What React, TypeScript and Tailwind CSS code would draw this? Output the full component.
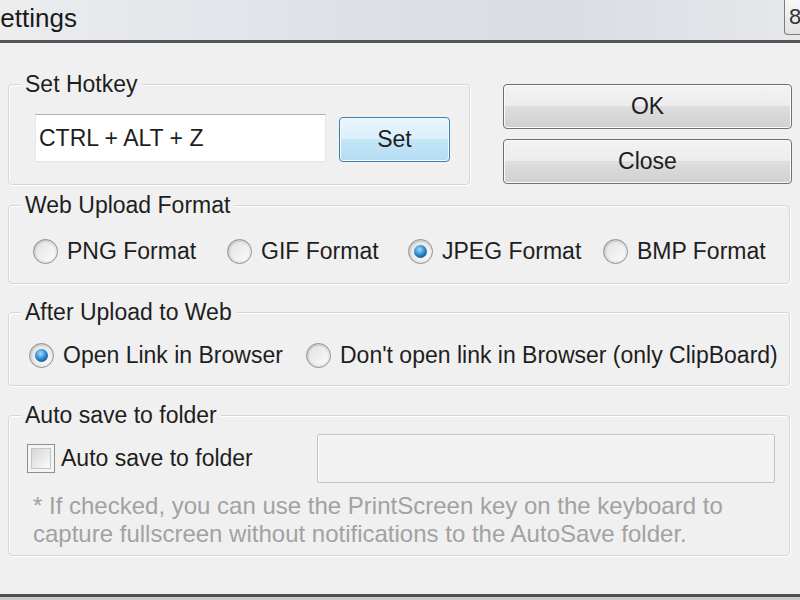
import React from "react";

function Radio({ checked = false }: { checked?: boolean }) {
  return (
    <span className="flex h-[25px] w-[25px] shrink-0 items-center justify-center rounded-full border border-[#8e8f8f] bg-[linear-gradient(135deg,#c4c4c4,#f8f8f8)]">
      <span className="flex h-[19px] w-[19px] items-center justify-center rounded-full bg-[linear-gradient(135deg,#e2e2e2,#fbfbfb)]">
        {checked && (
          <span className="h-[13px] w-[13px] rounded-full bg-[radial-gradient(circle_at_42%_35%,#a6dcfa_0%,#2f8fd4_45%,#0d5592_80%,#0a3f6e_100%)]" />
        )}
      </span>
    </span>
  );
}

function Option({ label, checked = false, className = "" }: { label: string; checked?: boolean; className?: string }) {
  return (
    <label className={`flex items-center gap-[9px] ${className}`}>
      <Radio checked={checked} />
      <span>{label}</span>
    </label>
  );
}

function Group({ title, className = "", children }: { title: string; className?: string; children: React.ReactNode }) {
  return (
    <fieldset
      className={`rounded-[4px] border border-[#d3d7db] shadow-[inset_1px_1px_0_#ffffff,1px_1px_0_#ffffff] ${className}`}
    >
      <legend className="ml-[12px] bg-[#f0f0f0] px-[4px] leading-[24px]">{title}</legend>
      {children}
    </fieldset>
  );
}

const grayBtn =
  "h-[45px] w-full rounded-[4px] border border-[#707070] bg-[linear-gradient(#f3f3f3_0%,#ececec_50%,#dedede_50%,#d0d0d0_100%)] shadow-[inset_0_0_0_1px_#fbfbfb] text-[23px] text-[#1e1e1e]";

export default function App() {
  return (
    <div className="flex h-[600px] w-[800px] flex-col overflow-hidden bg-[#f0f0f0] font-['Liberation_Sans',Arial,sans-serif] text-[23px] text-[#1e1e1e]">
      {/* title bar (window is cropped on the left, as in the capture) */}
      <div className="flex h-[43px] shrink-0 items-start border-b-[3px] border-[#545454] bg-[linear-gradient(90deg,#ebedef_0%,#dde1e6_45%,#d9dde2_70%,#e6e8eb_100%)]">
        <span className="ml-[-17px] mt-[3px] text-[26px] leading-[30px] text-[#1a1a1a]">Settings</span>
        <div className="ml-auto h-[35px] w-[16px] overflow-hidden rounded-bl-[4px] border-b border-l border-[#7d7d7d] bg-[linear-gradient(#f7f7f7,#e2e2e2)] pl-[4px] text-[22px] leading-[33px] text-[#333]">
          8
        </div>
      </div>

      {/* body */}
      <div className="flex-1 px-[8px] pt-[29px]">
        <div className="flex">
          <Group title="Set Hotkey" className="w-[462px]">
            <div className="flex items-end pb-[22px] pl-[26px] pt-[18px]">
              <input
                readOnly
                value="CTRL + ALT + Z"
                className="h-[48px] w-[291px] border border-[#e3e6ea] border-t-[#abadb3] bg-white pl-[3px] text-[23px] text-[#1e1e1e] outline-none"
              />
              <button className="ml-[13px] h-[45px] w-[111px] rounded-[4px] border border-[#3c7fb1] bg-[linear-gradient(#e9f5fc_0%,#dbeffb_50%,#c6e6f8_50%,#b3dbf2_100%)] shadow-[inset_0_0_0_1px_#f4fbff] text-[23px] text-[#1e1e1e]">
                Set
              </button>
            </div>
          </Group>
          <div className="ml-[33px] flex w-[289px] flex-col gap-[10px] pt-[12px]">
            <button className={grayBtn}>OK</button>
            <button className={grayBtn}>Close</button>
          </div>
        </div>

        <Group title="Web Upload Format" className="mr-[2px] mt-[8px]">
          <div className="grid grid-cols-[194px_181px_195px_auto] pb-[19px] pl-[24px] pt-[21px] leading-[26px]">
            <Option label="PNG Format" />
            <Option label="GIF Format" />
            <Option label="JPEG Format" checked />
            <Option label="BMP Format" />
          </div>
        </Group>

        <Group title="After Upload to Web" className="mr-[2px] mt-[16px]">
          <div className="flex pb-[17px] pl-[20px] pt-[18px] leading-[26px]">
            <Option label="Open Link in Browser" checked className="w-[277px]" />
            <Option label="Don't open link in Browser (only ClipBoard)" />
          </div>
        </Group>

        <Group title="Auto save to folder" className="mr-[2px] mt-[17px]">
          <div className="flex items-center pl-[18px] pr-[14px] pt-[7px]">
            <span className="flex h-[29px] w-[28px] items-center justify-center border border-[#8e8f8f] bg-[#f4f4f4]">
              <span className="h-[21px] w-[20px] border border-[#c5c5c5] bg-[linear-gradient(135deg,#d6d6d6,#fbfbfb)]" />
            </span>
            <span className="ml-[6px]">Auto save to folder</span>
            <div className="ml-auto h-[49px] w-[458px] rounded-[2px] border border-[#c2c4c6] bg-[#f2f2f2] shadow-[inset_1px_1px_0_#fafafa]" />
          </div>
          <p className="pb-[7px] pl-[24px] pt-[9px] text-[24px] leading-[28px] text-[#a2a2a2]">
            * If checked, you can use the PrintScreen key on the keyboard to
            <br />
            capture fullscreen without notifications to the AutoSave folder.
          </p>
        </Group>
      </div>

      {/* bottom frame */}
      <div className="h-[6px] shrink-0 border-t-[3px] border-[#4e4e4e] bg-[#c9c9c9]" />
    </div>
  );
}
